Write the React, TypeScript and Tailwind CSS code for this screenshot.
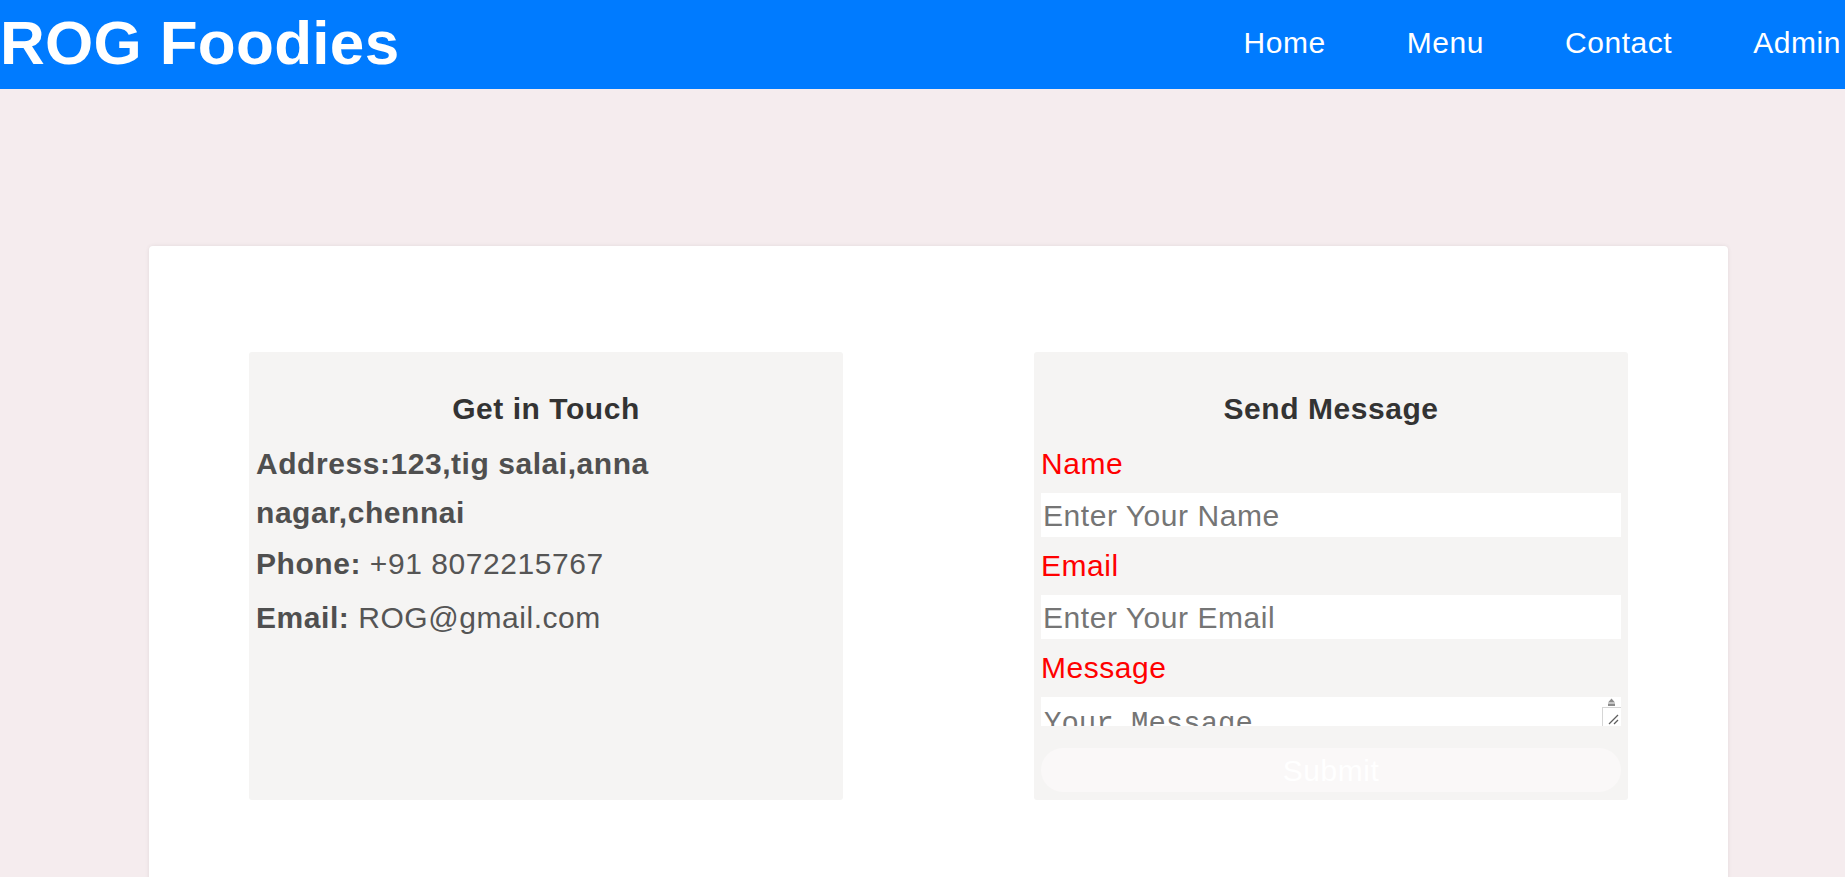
import React from "react";

export default function App() {
  return (
    <div
      className="min-h-screen bg-[#f5ecee]"
      style={{ fontFamily: '"Liberation Sans", Arial, sans-serif' }}
    >
      <header className="flex h-[89px] items-center justify-between bg-[#007bff] pb-[4px] text-white">
        <h1 className="text-[62px] font-bold leading-normal tracking-[0.3px]">ROG Foodies</h1>
        <nav className="flex items-center gap-[81px] pr-[4px] text-[30px] leading-normal tracking-[0.55px]">
          <a href="#">Home</a>
          <a href="#">Menu</a>
          <a href="#">Contact</a>
          <a href="#">Admin</a>
        </nav>
      </header>

      <main className="ml-[149px] mr-[117px] mt-[157px] rounded-[4px] bg-white px-[100px] pb-[100px] pt-[106px] shadow-[0_0_4px_rgba(0,0,0,0.08)]">
        <div className="flex justify-between tracking-[0.55px]">
          {/* Left box */}
          <section className="w-[594px] rounded-[3px] bg-[#f5f4f3] px-[7px] pb-[8px] pt-[7px]">
            <h2 className="pt-[33px] text-center text-[30px] font-bold leading-[34px] text-[#333]">
              Get in Touch
            </h2>
            <p className="mt-[13px] text-[30px] font-bold leading-[49px] text-[#4f4f4f]">
              Address:123,tig salai,anna nagar,chennai
            </p>
            <p className="mt-[2px] text-[30px] leading-[49px] text-[#555]">
              <strong className="font-bold text-[#4f4f4f]">Phone:</strong> +91 8072215767
            </p>
            <p className="mt-[5px] text-[30px] leading-[49px] text-[#555]">
              <strong className="font-bold text-[#4f4f4f]">Email:</strong> ROG@gmail.com
            </p>
          </section>

          {/* Right box */}
          <section className="flex w-[594px] flex-col rounded-[3px] bg-[#f5f4f3] px-[7px] pb-[8px] pt-[7px]">
            <h2 className="pt-[33px] text-center text-[30px] font-bold leading-[34px] text-[#333]">
              Send Message
            </h2>
            <label className="mt-[21px] block text-[30px] leading-[34px] text-[#ff0000]">Name</label>
            <input
              type="text"
              placeholder="Enter Your Name"
              className="mt-[12px] h-[44px] w-full border-0 bg-white px-[2px] text-[30px] leading-normal tracking-[0.55px] outline-none placeholder:text-[#757575]"
            />
            <label className="mt-[12px] block text-[30px] leading-[34px] text-[#ff0000]">Email</label>
            <input
              type="email"
              placeholder="Enter Your Email"
              className="mt-[12px] h-[44px] w-full border-0 bg-white px-[2px] text-[30px] leading-normal tracking-[0.55px] outline-none placeholder:text-[#757575]"
            />
            <label className="mt-[12px] block text-[30px] leading-[34px] text-[#ff0000]">Message</label>
            <div className="relative mt-[12px] h-[29px] w-full overflow-hidden bg-white">
              <textarea
                placeholder="Your Message"
                rows={4}
                className="block h-[29px] w-full resize-none overflow-hidden border-0 bg-white pl-[3px] pr-[20px] pt-[6px] text-[29px] leading-normal tracking-normal outline-none placeholder:text-[#757575]"
                style={{ fontFamily: '"Liberation Mono", "Courier New", monospace' }}
              />
              {/* scrollbar + resize corner */}
              <div className="pointer-events-none absolute right-0 top-0 flex h-full w-[19px] flex-col">
                <div className="flex h-[10px] items-start justify-center pt-[1px]">
                  <svg width="9" height="9" viewBox="0 0 9 9">
                    <path d="M4.5 0.5 L8 4.5 L1 4.5 Z" fill="#8c8c8c" />
                    <rect x="1" y="5.5" width="7" height="2.5" fill="#8c8c8c" />
                  </svg>
                </div>
                <div className="relative flex-1 border-l border-t border-[#d6d6d6] bg-white">
                  <svg className="absolute bottom-[1px] right-[2px]" width="12" height="12" viewBox="0 0 12 12">
                    <path d="M11 2 L2 11" stroke="#5e5e5e" strokeWidth="1.2" />
                    <path d="M11 7 L7 11" stroke="#5e5e5e" strokeWidth="1.2" />
                  </svg>
                </div>
              </div>
            </div>
            <button
              type="button"
              className="mt-[22px] h-[44px] w-full rounded-full bg-[#faf8f8] pb-[4px] text-center text-[30px] leading-normal tracking-[0.55px] text-white"
            >
              Submit
            </button>
          </section>
        </div>
      </main>
    </div>
  );
}
